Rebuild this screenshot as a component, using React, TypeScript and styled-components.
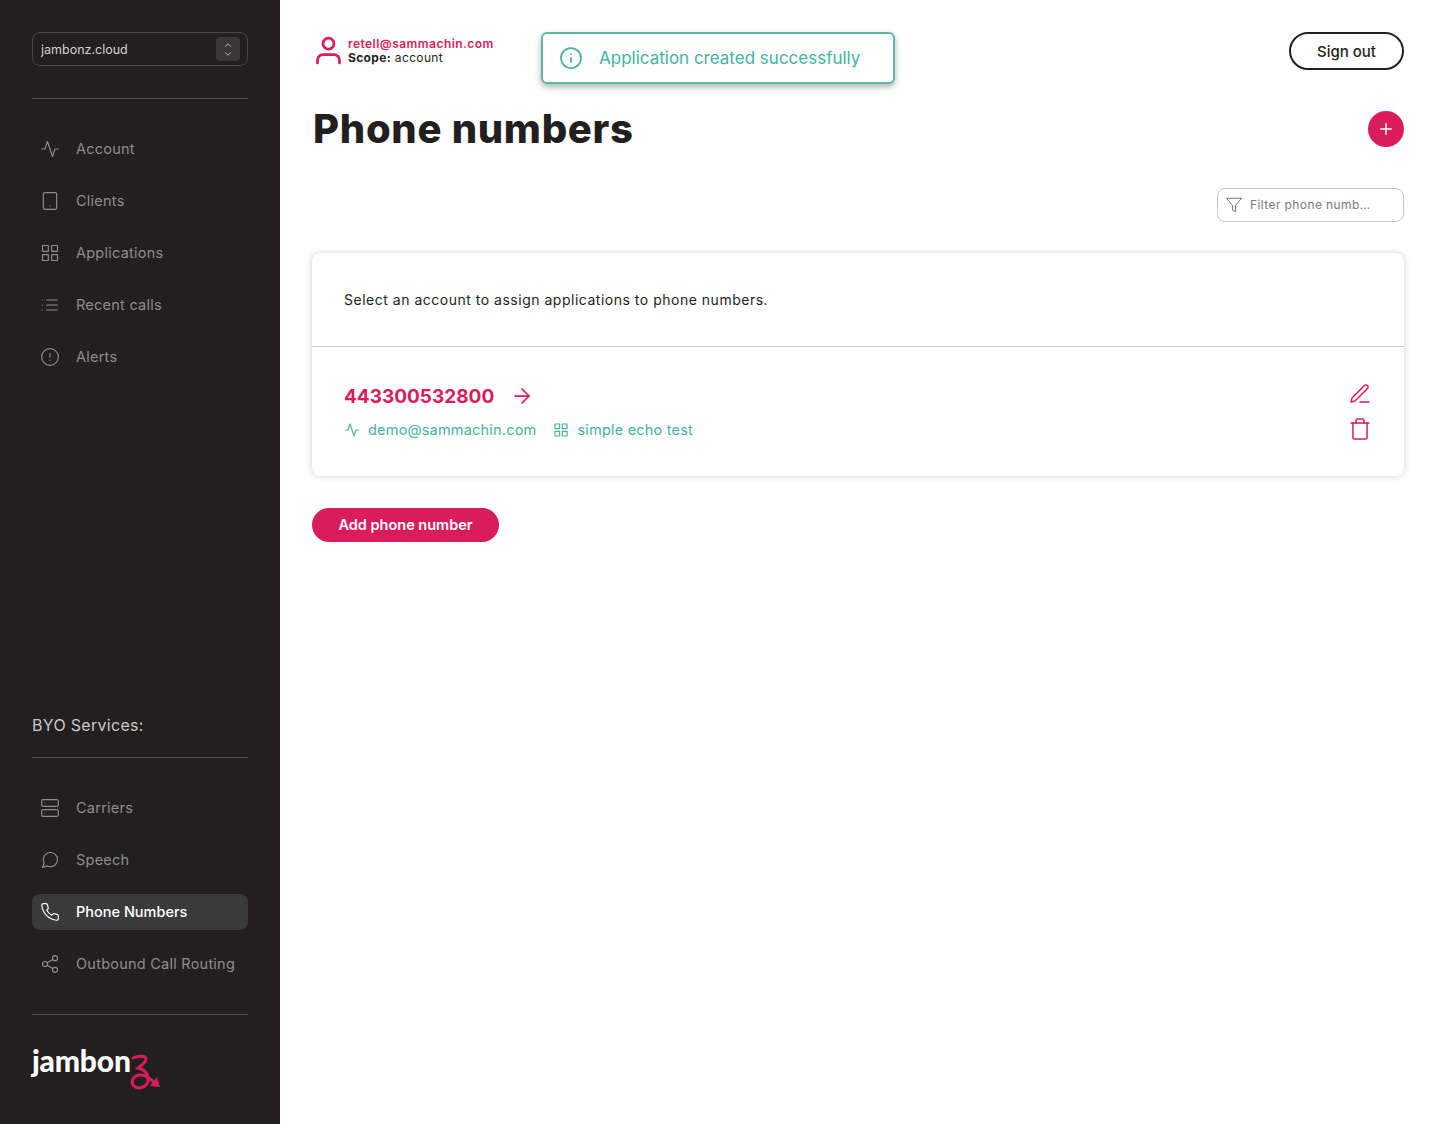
import React from 'react'
import styled, { createGlobalStyle } from 'styled-components'
import {
  FiActivity,
  FiAlertCircle,
  FiArrowRight,
  FiChevronDown,
  FiChevronUp,
  FiEdit3,
  FiFilter,
  FiGrid,
  FiInfo,
  FiList,
  FiMessageCircle,
  FiPhone,
  FiPlus,
  FiServer,
  FiShare2,
  FiTablet,
  FiTrash,
  FiUser,
} from 'react-icons/fi'

const topNav = [
  { label: 'Account', icon: FiActivity },
  { label: 'Clients', icon: FiTablet },
  { label: 'Applications', icon: FiGrid },
  { label: 'Recent calls', icon: FiList },
  { label: 'Alerts', icon: FiAlertCircle },
]

const byoNav = [
  { label: 'Carriers', icon: FiServer },
  { label: 'Speech', icon: FiMessageCircle },
  { label: 'Phone Numbers', icon: FiPhone, active: true },
  { label: 'Outbound Call Routing', icon: FiShare2 },
]

export default function App() {
  return (
    <Page>
      <GlobalStyle />
      <Sidebar>
        <AccountSelect>
          <span>jambonz.cloud</span>
          <SelectCaret>
            <FiChevronUp />
            <FiChevronDown />
          </SelectCaret>
        </AccountSelect>
        <Rule />
        <NavList>
          {topNav.map((item) => (
            <NavItem key={item.label}>
              <item.icon />
              <NavLabel>{item.label}</NavLabel>
            </NavItem>
          ))}
        </NavList>
        <ByoSection>
          <ByoTitle>BYO Services:</ByoTitle>
          <Rule />
          <NavList>
            {byoNav.map((item) => (
              <NavItem key={item.label} $active={item.active}>
                <item.icon />
                <NavLabel>{item.label}</NavLabel>
              </NavItem>
            ))}
          </NavList>
          <FooterRule />
          <Logo>
            <LogoText>jambon</LogoText>
            <LogoMark viewBox="0 0 34 38" fill="none">
              <path
                d="M5 4C9 2 18 1 18 5C18 9 12 12 10 14C16 15 21 20 20 27C19 33 10 36 6 32C2 28 5 22 11 21C17 20 23 25 28 30"
                stroke="#da1c5c"
                strokeWidth="3"
                strokeLinecap="round"
              />
              <path d="M32 33L22 32L29 23z" fill="#da1c5c" />
            </LogoMark>
          </Logo>
        </ByoSection>
      </Sidebar>
      <Main>
        <TopBar>
          <UserInfo>
            <UserGlyph />
            <UserText>
              <UserEmail>retell@sammachin.com</UserEmail>
              <UserScope>
                <strong>Scope:</strong> account
              </UserScope>
            </UserText>
          </UserInfo>
          <Toast>
            <FiInfo />
            Application created successfully
          </Toast>
          <SignOut>Sign out</SignOut>
        </TopBar>
        <TitleRow>
          <Title>Phone numbers</Title>
          <RoundAdd>
            <FiPlus />
          </RoundAdd>
        </TitleRow>
        <FilterRow>
          <FilterBox>
            <FiFilter />
            <FilterInput placeholder="Filter phone numbers" readOnly />
          </FilterBox>
        </FilterRow>
        <Card>
          <CardNote>Select an account to assign applications to phone numbers.</CardNote>
          <NumberRow>
            <div>
              <NumberLine>
                443300532800
                <FiArrowRight />
              </NumberLine>
              <MetaLine>
                <MetaItem>
                  <FiActivity />
                  demo@sammachin.com
                </MetaItem>
                <MetaItem>
                  <FiGrid />
                  simple echo test
                </MetaItem>
              </MetaLine>
            </div>
            <RowActions>
              <FiEdit3 />
              <FiTrash />
            </RowActions>
          </NumberRow>
        </Card>
        <AddButton>Add phone number</AddButton>
      </Main>
    </Page>
  )
}

const GlobalStyle = createGlobalStyle`
  * {
    box-sizing: border-box;
  }
  body {
    margin: 0;
    background: #fff;
    color: #231f20;
    font-family: Inter, "Liberation Sans", sans-serif;
  }
`

const Page = styled.div`
  display: grid;
  grid-template-columns: 280px 1fr;
  height: 1124px;
  overflow: hidden;
`

const Sidebar = styled.aside`
  display: flex;
  flex-direction: column;
  padding: 32px;
  background: #231f20;
  color: #bdbcbc;
`

const AccountSelect = styled.div`
  display: flex;
  align-items: center;
  justify-content: space-between;
  height: 34px;
  padding: 0 7px 0 8px;
  border: 1px solid #4a4647;
  border-radius: 8px;
  color: #d3d2d2;
  font-size: 12.5px;
`

const SelectCaret = styled.span`
  display: flex;
  flex-direction: column;
  align-items: center;
  justify-content: center;
  width: 24px;
  height: 24px;
  border-radius: 4px;
  background: #3a3738;
  svg {
    width: 10px;
    height: 10px;
    margin: -0.5px 0;
  }
`

const Rule = styled.hr`
  width: 100%;
  height: 1px;
  margin: 32px 0;
  border: 0;
  background: #4f4c4d;
`

const FooterRule = styled(Rule)`
  margin: 32px 0 30px;
`

const NavList = styled.nav`
  display: flex;
  flex-direction: column;
  gap: 16px;
`

const NavItem = styled.a<{ $active?: boolean }>`
  display: flex;
  align-items: center;
  gap: 16px;
  height: 36px;
  padding: 0 8px;
  border-radius: 8px;
  background: ${(p) => (p.$active ? '#3a3a3a' : 'transparent')};
  color: ${(p) => (p.$active ? '#fff' : '#8f8c8d')};
  font-size: 14.5px;
  font-weight: ${(p) => (p.$active ? 500 : 400)};
  letter-spacing: ${(p) => (p.$active ? '0' : '0.24px')};
  svg {
    flex: none;
    width: 20px;
    height: 20px;
    stroke-width: 1.4;
  }
`

const NavLabel = styled.span`
  margin-bottom: 2px;
`

const ByoSection = styled.div`
  margin-top: auto;
`

const ByoTitle = styled.div`
  margin-bottom: -10px;
  color: #c8c7c7;
  font-size: 16px;
  line-height: 20px;
  letter-spacing: 0.3px;
`

const Logo = styled.div`
  display: flex;
  align-items: flex-start;
  height: 47px;
`

const LogoText = styled.span`
  color: #fff;
  font-family: Lato, sans-serif;
  font-size: 30px;
  font-weight: 900;
  line-height: 30px;
  letter-spacing: -0.2px;
`

const LogoMark = styled.svg`
  flex: none;
  width: 34px;
  height: 38px;
  margin: 9px 0 0 -3px;
`

const Main = styled.main`
  min-width: 0;
  padding: 32px;
`

const TopBar = styled.header`
  position: relative;
  display: flex;
  align-items: flex-start;
  justify-content: space-between;
  height: 38px;
`

const UserInfo = styled.div`
  display: flex;
  gap: 3px;
  padding-top: 3px;
`

const UserGlyph = styled(FiUser)`
  width: 33px;
  height: 33px;
  margin-top: -1px;
  color: #da1c5c;
  stroke-width: 2;
`

const UserText = styled.div`
  padding-top: 2px;
  font-size: 12px;
  line-height: 14px;
`

const UserEmail = styled.div`
  color: #da1c5c;
  font-weight: 600;
  letter-spacing: 0.45px;
`

const UserScope = styled.div`
  color: #231f20;
  letter-spacing: 0.35px;
`

const Toast = styled.div`
  position: absolute;
  top: 0;
  left: 229px;
  display: flex;
  align-items: center;
  gap: 16px;
  width: 354px;
  height: 52px;
  padding: 0 16px;
  border: 2px solid #5bb8a8;
  border-radius: 6px;
  background: #fff;
  box-shadow: 0 3px 6px rgba(0, 0, 0, 0.3);
  color: #44b3a2;
  font-size: 17px;
  svg {
    flex: none;
    width: 24px;
    height: 24px;
    stroke-width: 1.75;
  }
`

const SignOut = styled.button`
  width: 115px;
  height: 38px;
  border: 2px solid #231f20;
  border-radius: 19px;
  background: #fff;
  color: #231f20;
  font: 500 15px Inter, sans-serif;
`

const TitleRow = styled.div`
  display: flex;
  align-items: center;
  justify-content: space-between;
  height: 36px;
  margin-top: 41px;
`

const Title = styled.h1`
  margin: 0 0 0 1px;
  font-size: 40px;
  font-weight: 800;
  line-height: 36px;
  letter-spacing: 0.7px;
`

const RoundAdd = styled.button`
  display: flex;
  align-items: center;
  justify-content: center;
  width: 36px;
  height: 36px;
  padding: 0;
  border: 0;
  border-radius: 50%;
  background: #da1c5c;
  color: #fff;
  svg {
    width: 18px;
    height: 18px;
  }
`

const FilterRow = styled.div`
  display: flex;
  justify-content: flex-end;
  margin-top: 41px;
`

const FilterBox = styled.div`
  display: flex;
  align-items: center;
  gap: 7px;
  width: 187px;
  height: 34px;
  padding: 0 7px;
  border: 1px solid #c6c6c6;
  border-radius: 8px;
  color: #6d6d6d;
  svg {
    flex: none;
    width: 18px;
    height: 18px;
    stroke-width: 1.25;
  }
`

const FilterInput = styled.input`
  width: 124px;
  border: 0;
  outline: 0;
  padding: 0 0 1px;
  font: 400 12px Inter, sans-serif;
  letter-spacing: 0.4px;
  text-overflow: ellipsis;
  &::placeholder {
    color: #7a7a7a;
    opacity: 1;
  }
`

const Card = styled.section`
  margin-top: 31px;
  border-radius: 8px;
  background: #fff;
  box-shadow: 0 0 6px rgba(0, 0, 0, 0.2);
`

const CardNote = styled.p`
  height: 94px;
  margin: 0;
  padding: 38px 32px 0;
  border-bottom: 1px solid #c6c6c6;
  font-size: 14px;
  line-height: 18px;
  letter-spacing: 0.51px;
`

const NumberRow = styled.div`
  display: flex;
  align-items: flex-start;
  justify-content: space-between;
  height: 129px;
  padding: 35px 32px 0;
`

const NumberLine = styled.div`
  display: flex;
  align-items: center;
  gap: 16px;
  height: 28px;
  color: #d91c5c;
  font-size: 19px;
  font-weight: 700;
  svg {
    width: 24px;
    height: 24px;
    stroke-width: 1.75;
  }
`

const MetaLine = styled.div`
  display: flex;
  gap: 17px;
  margin-top: 11px;
`

const MetaItem = styled.span`
  display: flex;
  align-items: center;
  gap: 8px;
  color: #44b3a2;
  font-size: 14.5px;
  line-height: 18px;
  letter-spacing: 0.2px;
  svg {
    width: 16px;
    height: 16px;
    stroke-width: 1.75;
  }
`

const RowActions = styled.div`
  display: flex;
  flex-direction: column;
  gap: 11px;
  color: #d91c5c;
  svg {
    display: block;
    width: 24px;
    height: 24px;
    stroke-width: 1.5;
  }
`

const AddButton = styled.button`
  display: block;
  width: 187px;
  height: 34px;
  margin-top: 32px;
  padding: 0 0 2px;
  border: 0;
  border-radius: 17px;
  background: #da1c5c;
  color: #fff;
  font: 600 14.5px Inter, sans-serif;
`
